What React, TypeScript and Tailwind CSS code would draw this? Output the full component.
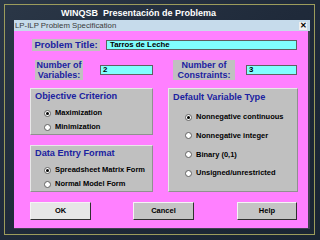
import React from 'react'

const font = { fontFamily: '"Liberation Sans", Arial, sans-serif' }

function Radio({ label, checked }: { label: string; checked?: boolean }) {
    return (
        <div className="flex items-center h-[10px]">
            <span className="w-[7px] h-[7px] rounded-full bg-white border border-[#606060] flex items-center justify-center shrink-0">
                {checked && <span className="w-[3px] h-[3px] rounded-full bg-black" />}
            </span>
            <span className="ml-[4px] text-[7.5px] font-bold text-black leading-none whitespace-nowrap">{label}</span>
        </div>
    )
}

function Group({ title, className, children }: { title: string; className: string; children: React.ReactNode }) {
    return (
        <div className={`bg-[#c0c0c0] border border-t-[#e8e8e8] border-l-[#e8e8e8] border-r-[#909090] border-b-[#909090] ${className}`}>
            <div className="pl-[4px] text-[9.2px] font-bold text-[#1b22a0] leading-[10px] whitespace-nowrap">{title}</div>
            {children}
        </div>
    )
}

function Btn({ label, className }: { label: string; className: string }) {
    return (
        <div className={`h-[18px] flex items-center justify-center border border-t-[#f4f4f4] border-l-[#f4f4f4] border-r-[#303030] border-b-[#303030] text-[7.5px] font-bold text-black ${className}`}>
            {label}
        </div>
    )
}

export default function App() {
    return (
        <div style={font} className="w-[320px] h-[240px] overflow-hidden bg-gradient-to-br from-[#2b3747] via-[#1f2a3a] to-[#1a2533] pt-[4px] pl-[4px]">
            <div className="w-[311px] h-[231px] border border-[#9c9c5c]">
                <div className="h-[15px] pl-[56px] pt-[3px] text-[9px] leading-[10px] font-bold text-white whitespace-pre">
                    WINQSB  Presentación de Problema
                </div>
                <div className="ml-[9px] w-[296px] h-[209px] flex flex-col">
                    <div className="h-[11px] bg-[#c6dbeb] flex items-center justify-between pl-[1px] pr-[3px]">
                        <span className="text-[7.8px] text-[#3a3a3a] leading-none whitespace-nowrap">LP-ILP Problem Specification</span>
                        <span className="w-[8px] h-[8px] bg-[#f0f0f0] flex items-center justify-center text-[8px] font-bold leading-none text-black">✕</span>
                    </div>
                    <div className="flex-1 bg-[#ff80ff] border-r-2 border-b border-[#404050]">
                        <div className="mt-[8px] flex items-center">
                            <div className="ml-[18px] w-[68px] h-[12px] bg-[#c0c0c0] flex items-center justify-center text-[9.5px] font-bold text-[#1b22a0] leading-none whitespace-nowrap">
                                Problem Title:
                            </div>
                            <div className="ml-[6px] w-[191px] h-[10px] bg-[#80ffff] border border-[#606060] flex items-center pl-[3px] text-[7.8px] font-bold text-black leading-none">
                                Tarros de Leche
                            </div>
                        </div>
                        <div className="mt-[9px] flex items-center">
                            <div className="ml-[21px] w-[48px] h-[20px] bg-[#c0c0c0] flex flex-col items-center justify-center text-[9px] font-bold text-[#1b22a0] leading-[10px] text-center">
                                <span>Number of</span>
                                <span>Variables:</span>
                            </div>
                            <div className="ml-[17px] w-[53px] h-[10px] bg-[#80ffff] border border-[#606060] flex items-center pl-[2px] text-[7.8px] font-bold text-black leading-none">
                                2
                            </div>
                            <div className="ml-[20px] w-[62px] h-[20px] bg-[#c0c0c0] flex flex-col items-center justify-center text-[9px] font-bold text-[#1b22a0] leading-[10px] text-center">
                                <span>Number of</span>
                                <span>Constraints:</span>
                            </div>
                            <div className="ml-[11px] w-[51px] h-[10px] bg-[#80ffff] border border-[#606060] flex items-center pl-[2px] text-[7.8px] font-bold text-black leading-none">
                                3
                            </div>
                        </div>
                        <div className="mt-[8px] flex items-start">
                            <div className="ml-[16px] w-[123px] flex flex-col gap-[10px]">
                                <Group title="Objective Criterion" className="h-[47px] pt-[2px]">
                                    <div className="pl-[13px] pt-[7px] flex flex-col gap-[4px]">
                                        <Radio label="Maximization" checked />
                                        <Radio label="Minimization" />
                                    </div>
                                </Group>
                                <Group title="Data Entry Format" className="h-[47px] pt-[2px]">
                                    <div className="pl-[13px] pt-[7px] flex flex-col gap-[4px]">
                                        <Radio label="Spreadsheet Matrix Form" checked />
                                        <Radio label="Normal Model Form" />
                                    </div>
                                </Group>
                            </div>
                            <Group title="Default Variable Type" className="ml-[15px] w-[130px] h-[104px] pt-[3px]">
                                <div className="pl-[16px] pt-[10px] flex flex-col gap-[8.7px]">
                                    <Radio label="Nonnegative continuous" checked />
                                    <Radio label="Nonnegative integer" />
                                    <Radio label="Binary (0,1)" />
                                    <Radio label="Unsigned/unrestricted" />
                                </div>
                            </Group>
                        </div>
                        <div className="mt-[10px] flex items-center">
                            <Btn label="OK" className="ml-[16px] w-[61px] bg-[#e6e6e6]" />
                            <Btn label="Cancel" className="ml-[42px] w-[61px] bg-[#c4c4c4]" />
                            <Btn label="Help" className="ml-[43px] w-[60px] bg-[#c4c4c4]" />
                        </div>
                    </div>
                </div>
            </div>
        </div>
    )
}
